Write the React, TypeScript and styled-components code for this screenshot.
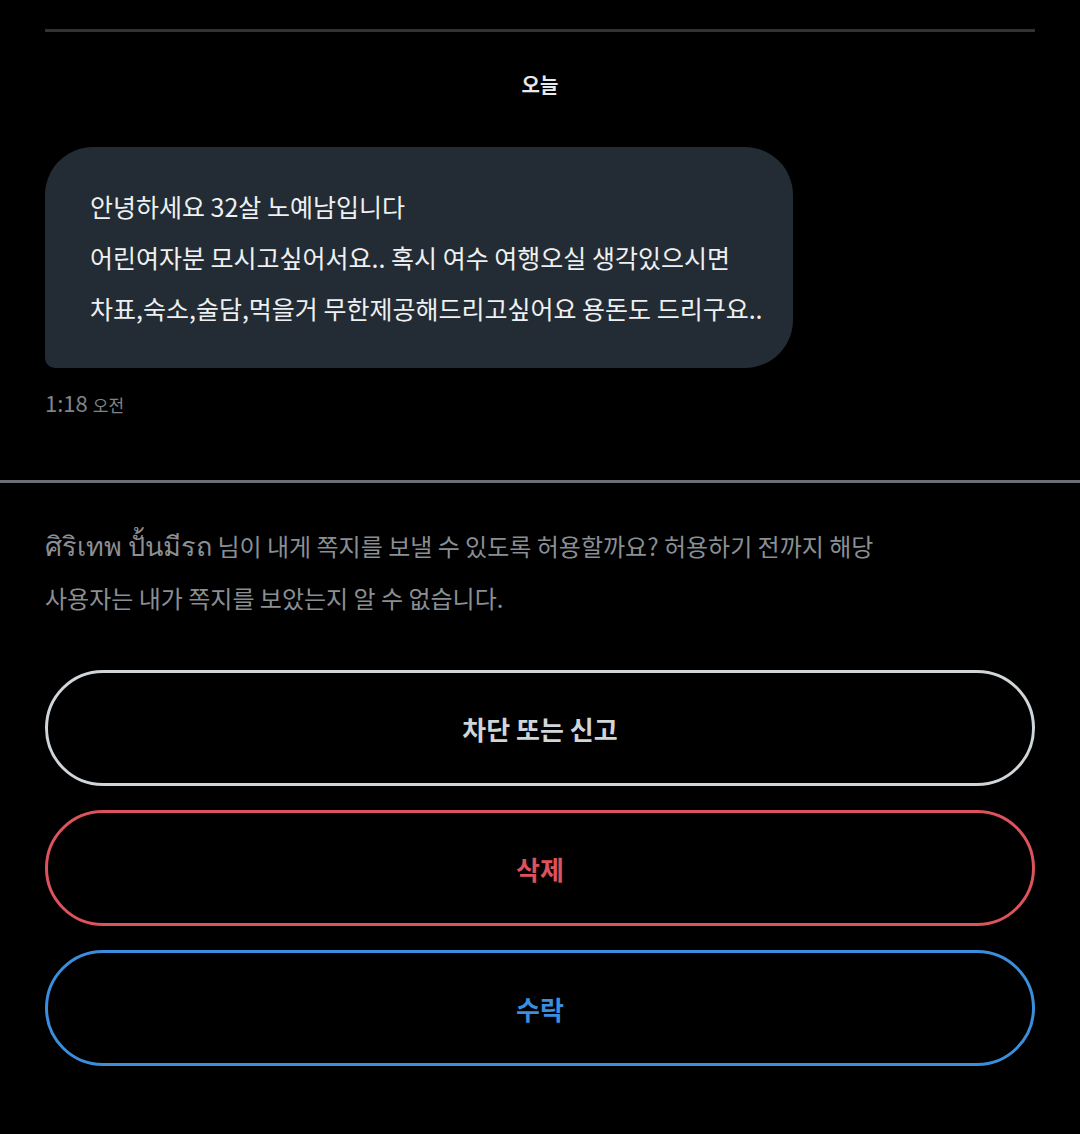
import React from "react";
import styled, { createGlobalStyle } from "styled-components";

const GlobalStyle = createGlobalStyle`
  html, body {
    margin: 0;
    padding: 0;
    background: #000;
  }
  body {
    font-family: "Noto Sans CJK KR", "Noto Sans", sans-serif;
    color: #e7e9ea;
  }
`;

const Page = styled.div`
  width: 1080px;
  min-height: 1134px;
  background: #000;
  display: flex;
  flex-direction: column;
`;

const Thread = styled.div`
  padding: 29px 45px 0;
  display: flex;
  flex-direction: column;
`;

const TopRule = styled.div`
  height: 3px;
  background: #2f3336;
`;

const DayLabel = styled.div`
  text-align: center;
  font-size: 20px;
  font-weight: 700;
  color: #e7e9ea;
  margin-top: 38px;
  line-height: 30px;
`;

const Bubble = styled.div`
  margin-top: 47px;
  align-self: flex-start;
  width: 748px;
  box-sizing: border-box;
  background: #232c34;
  border-radius: 48px 48px 48px 10px;
  padding: 34px 30px 34px 45px;
  font-size: 25px;
  line-height: 51px;
  color: #eef0f1;
  white-space: pre-line;
`;

const Time = styled.div`
  margin-top: 17px;
  font-size: 22px;
  color: #7f8489;
  line-height: 34px;
`;

const Small = styled.span`
  font-size: 17px;
  margin-left: 5px;
`;

const Divider = styled.div`
  margin-top: 58px;
  height: 3px;
  background: #6b6f74;
`;

const Footer = styled.div`
  padding: 37px 45px 0;
  display: flex;
  flex-direction: column;
`;

const Notice = styled.p`
  margin: 0;
  font-size: 24px;
  line-height: 52px;
  color: #8a8f94;
`;

const Name = styled.span`
  font-size: 27px;
  line-height: 40px;
  font-weight: 400;
`;

const Actions = styled.div`
  margin-top: 46px;
  display: flex;
  flex-direction: column;
  gap: 24px;
`;

const Action = styled.button<{ $tone: string }>`
  height: 116px;
  width: 100%;
  box-sizing: border-box;
  border: 3px solid ${(p) => p.$tone};
  border-radius: 58px;
  background: transparent;
  color: ${(p) => p.$tone};
  font-family: "Noto Sans CJK KR", "Noto Sans", sans-serif;
  font-size: 26px;
  font-weight: 700;
  cursor: pointer;
`;

export default function App() {
  return (
    <Page>
      <GlobalStyle />
      <Thread>
        <TopRule />
        <DayLabel>오늘</DayLabel>
        <Bubble>
          {"안녕하세요 32살 노예남입니다\n어린여자분 모시고싶어서요.. 혹시 여수 여행오실 생각있으시면\n차표,숙소,술담,먹을거 무한제공해드리고싶어요 용돈도 드리구요.."}
        </Bubble>
        <Time>
          1:18<Small>오전</Small>
        </Time>
      </Thread>
      <Divider />
      <Footer>
        <Notice>
          <Name>ศิริเทพ ปั้นมีรถ</Name> 님이 내게 쪽지를 보낼 수 있도록 허용할까요? 허용하기 전까지 해당
          <br />
          사용자는 내가 쪽지를 보았는지 알 수 없습니다.
        </Notice>
        <Actions>
          <Action $tone="#cfd5d9">차단 또는 신고</Action>
          <Action $tone="#dc525d">삭제</Action>
          <Action $tone="#3b8ddd">수락</Action>
        </Actions>
      </Footer>
    </Page>
  );
}
